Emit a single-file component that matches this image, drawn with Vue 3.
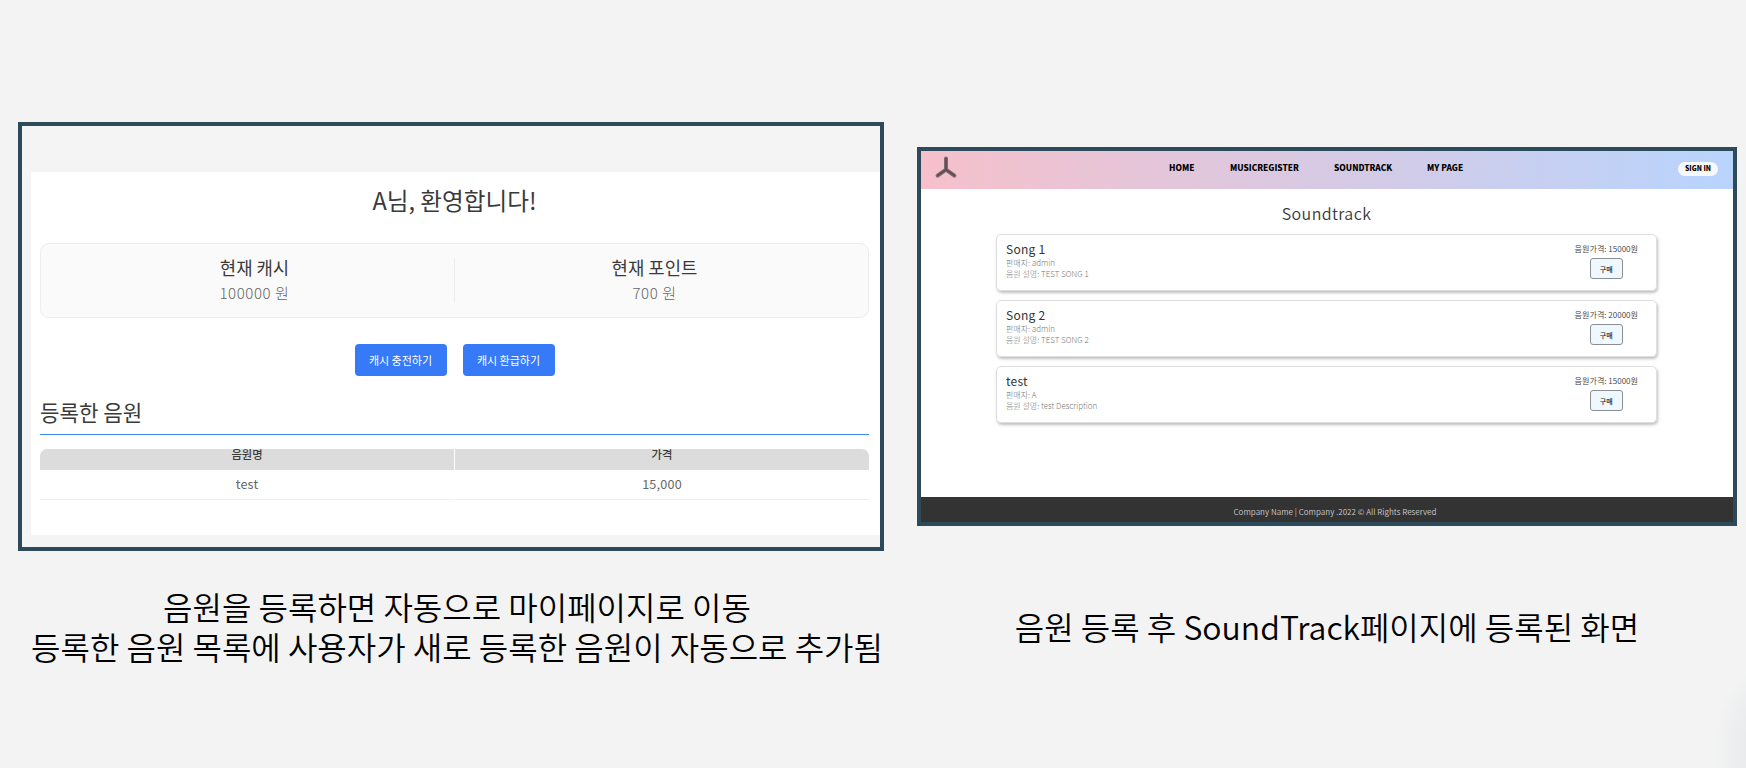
<script setup>
const balances = [
  { label: '현재 캐시', value: '100000 원' },
  { label: '현재 포인트', value: '700 원' },
]
const menu = [
  { text: 'HOME', cls: 'm-home' },
  { text: 'MUSICREGISTER', cls: 'm-register' },
  { text: 'SOUNDTRACK', cls: 'm-track' },
  { text: 'MY PAGE', cls: 'm-page' },
]
const songs = [
  { title: 'Song 1', seller: 'admin', desc: 'TEST SONG 1', price: 15000 },
  { title: 'Song 2', seller: 'admin', desc: 'TEST SONG 2', price: 20000 },
  { title: 'test', seller: 'A', desc: 'test Description', price: 15000 },
]
</script>

<template>
  <main class="slide">
    <section class="left">
      <div class="frame my-frame">
        <div class="mypage">
          <h1>A님, 환영합니다!</h1>
          <div class="balance">
            <div v-for="b in balances" :key="b.label" class="cell">
              <strong>{{ b.label }}</strong>
              <span>{{ b.value }}</span>
            </div>
          </div>
          <div class="actions">
            <button>캐시 충전하기</button>
            <button>캐시 환급하기</button>
          </div>
          <h2>등록한 음원</h2>
          <div class="table">
            <div class="th first">음원명</div>
            <div class="th last">가격</div>
            <div class="td test">test</div>
            <div class="td">15,000</div>
          </div>
        </div>
      </div>
      <p class="caption">음원을 등록하면 자동으로 마이페이지로 이동<br />등록한 음원 목록에 사용자가 새로 등록한 음원이 자동으로 추가됨</p>
    </section>

    <section class="right">
      <div class="frame shop-frame">
        <header class="nav">
          <svg class="logo" viewBox="0 0 24 24">
            <g fill="none" stroke-linecap="round">
              <path d="M12 3.4V14.6M12 14.6L3.6 20.6M12 14.6L20.4 20.6" stroke="#806a71" stroke-width="4" />
              <path d="M12 3.6V14.6M12 14.6L3.8 20.4M12 14.6L20.2 20.4" stroke="#5c484f" stroke-width="1.6" />
            </g>
          </svg>
          <nav>
            <span v-for="m in menu" :key="m.text" :class="m.cls">{{ m.text }}</span>
          </nav>
          <span class="signin">SIGN IN</span>
        </header>
        <div class="shop">
          <h3>Soundtrack</h3>
          <article v-for="s in songs" :key="s.title" class="card">
            <div class="info">
              <b>{{ s.title }}</b>
              <span>판매자: {{ s.seller }}</span>
              <span>음원 설명: {{ s.desc }}</span>
            </div>
            <div class="buy">
              <span>음원가격: {{ s.price }}원</span>
              <button>구매</button>
            </div>
          </article>
        </div>
        <footer>Company Name | Company .2022 © All Rights Reserved</footer>
      </div>
      <p class="caption">음원 등록 후 SoundTrack페이지에 등록된 화면</p>
    </section>
  </main>
</template>

<style>
body {
  margin: 0;
  background: #f3f3f3;
}
</style>

<style scoped>
* {
  box-sizing: border-box;
}
.slide {
  width: 1746px;
  height: 768px;
  overflow: hidden;
  display: flex;
  padding-left: 18px;
  background: radial-gradient(ellipse 72px 90px at 1786px 745px, #e6e9eb 45%, #f3f3f3 100%);
  font-family: 'Noto Sans CJK KR', 'Noto Sans', sans-serif;
  color: #3a3a3a;
}
h1, h2, h3, p {
  margin: 0;
  font-weight: 400;
}
button {
  font-family: inherit;
  padding: 0;
}
.left {
  width: 866px;
  margin-right: 33px;
  padding-top: 122px;
}
.right {
  width: 820px;
  padding-top: 147px;
}
.frame {
  border: 4px solid #2d4a5a;
}
.my-frame {
  height: 429px;
  padding: 46px 0 0 9px;
  background: #f4f4f4;
}
.mypage {
  height: 363px;
  background: #fff;
  padding: 0 11px 0 9px;
}
h1 {
  padding-top: 11px;
  height: 71px;
  line-height: 34px;
  font-size: 23.6px;
  text-align: center;
}
.balance {
  height: 75px;
  border: 1px solid #ededed;
  border-radius: 9px;
  background: #fafafa;
  display: flex;
  padding: 14px;
}
.cell {
  flex: 1;
  display: flex;
  flex-direction: column;
  align-items: center;
}
.cell + .cell {
  border-left: 1px solid #ebebeb;
}
.cell strong {
  font-weight: 400;
  font-size: 17.8px;
  line-height: 18px;
}
.cell span {
  font-size: 15px;
  font-weight: 300;
  letter-spacing: 0.6px;
  line-height: 20px;
  margin-top: 7px;
  color: #666;
}
.actions {
  display: flex;
  justify-content: center;
  gap: 16px;
  margin-top: 26px;
}
.actions button {
  width: 92px;
  height: 32px;
  border: 0;
  border-radius: 4px;
  background: #367af7;
  color: #fff;
  font-size: 11px;
}
h2 {
  margin-top: 18px;
  height: 41px;
  border-bottom: 1px solid #3d86fb;
  font-size: 21.2px;
  line-height: 36px;
}
.table {
  margin-top: 14px;
  display: grid;
  grid-template-columns: 1fr 1fr;
  column-gap: 1px;
  text-align: center;
}
.th {
  height: 21px;
  background: #dcdcdc;
  font-size: 11.3px;
  line-height: 10px;
  font-weight: 500;
}
.first {
  border-radius: 7px 0 0 0;
}
.last {
  border-radius: 0 7px 0 0;
}
.td {
  height: 30px;
  border-bottom: 1px solid #eee;
  font-size: 12.6px;
  letter-spacing: 0.2px;
  line-height: 27px;
  color: #666;
}
.caption {
  color: #000;
  font-size: 32px;
  line-height: 40px;
  font-weight: 350;
  white-space: nowrap;
  text-align: center;
}
.left .caption {
  margin: 35px 0 0 12px;
}
.right .caption {
  margin: 80px 0 0 0;
}
.shop-frame {
  height: 379px;
  background: #fff;
  display: flex;
  flex-direction: column;
}
.nav {
  height: 38px;
  flex: none;
  display: flex;
  background: linear-gradient(90deg, #f6c0cb, #b8d4fd);
  color: #000;
  font-weight: 900;
}
.logo {
  width: 24px;
  height: 24px;
  margin: 4px 0 0 13px;
}
nav {
  display: flex;
  margin-left: 211px;
  width: 509px;
  font-size: 8.3px;
  line-height: 33px;
  white-space: nowrap;
}
.m-home { width: 61px; }
.m-register { width: 104px; }
.m-track { width: 93px; }
.signin {
  width: 40px;
  height: 14px;
  margin-top: 11px;
  border-radius: 7px;
  background: #f8f8f8;
  font-size: 6.8px;
  line-height: 12px;
  text-align: center;
}
.shop {
  flex: 1;
  padding: 0 76px 0 75px;
}
h3 {
  height: 45px;
  padding-top: 11px;
  line-height: 26px;
  font-size: 16px;
  font-weight: 350;
  letter-spacing: 0.4px;
  text-align: center;
}
.card {
  height: 57px;
  margin-bottom: 9px;
  border: 1px solid #dedede;
  border-radius: 5px;
  box-shadow: 1px 2px 3px rgba(0, 0, 0, 0.25);
  display: flex;
  justify-content: space-between;
  padding: 6px 18px 0 9px;
}
.info {
  display: flex;
  flex-direction: column;
  font-size: 8px;
  font-weight: 300;
  line-height: 11px;
  color: #777;
}
.info b {
  font-size: 12px;
  letter-spacing: 0.25px;
  line-height: 16px;
  font-weight: 400;
  color: #333;
}
.buy {
  display: flex;
  flex-direction: column;
  align-items: center;
  font-size: 8.1px;
  line-height: 17px;
  font-weight: 350;
}
.buy span {
  height: 17px;
  margin-top: -1px;
}
.buy button {
  width: 33px;
  height: 21px;
  margin: 1px 0 0 0;
  border: 1px solid #8b8f94;
  border-radius: 3px;
  background: #f0f8ff;
  font-size: 7px;
  font-weight: 500;
  color: #222;
}
footer {
  height: 25px;
  flex: none;
  padding-left: 16px;
  background: #333;
  color: #ccc;
  font-size: 8px;
  letter-spacing: 0.02px;
  line-height: 30px;
  font-weight: 350;
  text-align: center;
}
</style>
